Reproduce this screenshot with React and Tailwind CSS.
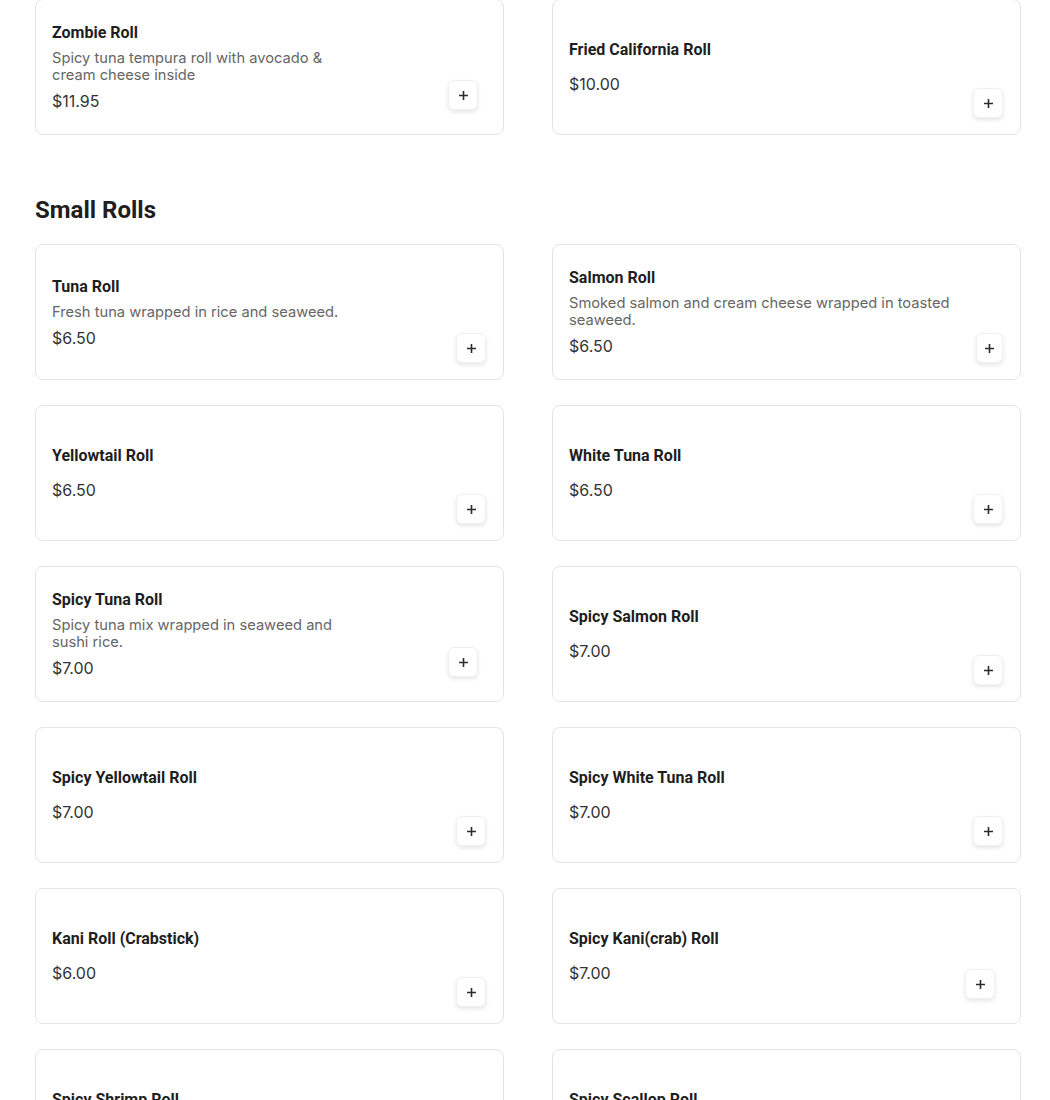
import React from 'react';

const top = [
  { name: 'Zombie Roll', desc: 'Spicy tuna tempura roll with avocado & cream cheese inside', price: '$11.95', alt: true },
  { name: 'Fried California Roll', price: '$10.00' },
];

const small = [
  { name: 'Tuna Roll', desc: 'Fresh tuna wrapped in rice and seaweed.', price: '$6.50' },
  { name: 'Salmon Roll', desc: 'Smoked salmon and cream cheese wrapped in toasted seaweed.', price: '$6.50' },
  { name: 'Yellowtail Roll', price: '$6.50' },
  { name: 'White Tuna Roll', price: '$6.50' },
  { name: 'Spicy Tuna Roll', desc: 'Spicy tuna mix wrapped in seaweed and sushi rice.', price: '$7.00', alt: true },
  { name: 'Spicy Salmon Roll', price: '$7.00' },
  { name: 'Spicy Yellowtail Roll', price: '$7.00' },
  { name: 'Spicy White Tuna Roll', price: '$7.00' },
  { name: 'Kani Roll (Crabstick)', price: '$6.00' },
  { name: 'Spicy Kani(crab) Roll', price: '$7.00', alt: true },
  { name: 'Spicy Shrimp Roll', price: '$7.00' },
  { name: 'Spicy Scallop Roll', price: '$7.00' },
];

function Plus() {
  return (
    <svg width="11" height="11" viewBox="0 0 11 11" fill="none">
      <path d="M5.5 1v9M1 5.5h9" stroke="#2b2b2b" strokeWidth="1.6" />
    </svg>
  );
}

function Card({ item }) {
  return (
    <div className="h-[136px] border border-[#e4e4e4] rounded-lg bg-white flex justify-between items-center pl-4 pr-[17px]">
      <div className={'flex flex-col ' + (item.alt ? 'max-w-[305px]' : 'max-w-[410px]')}>
        <div className="text-[16px] font-bold text-[#1e1e1e] leading-[20px]" style={{ fontFamily: 'Roboto, sans-serif' }}>{item.name}</div>
        {item.desc && (
          <div className="text-[14.7px] text-[#666] leading-[17px] mt-[7px]" style={{ fontFamily: 'Inter, sans-serif' }}>{item.desc}</div>
        )}
        <div className={'text-[16px] text-[#333] leading-[20px] ' + (item.desc ? 'mt-[7px]' : 'mt-[14px]')} style={{ fontFamily: 'Inter, sans-serif' }}>{item.price}</div>
      </div>
      <button className={'self-end w-[30px] h-[30px] rounded-md bg-white border border-[#f0f0f0] shadow-[0_2px_4px_rgba(0,0,0,0.1)] flex items-center justify-center ' + (item.alt ? 'mb-6 mr-2' : 'mb-4')}>
        <Plus />
      </button>
    </div>
  );
}

export default function App() {
  return (
    <div className="bg-white h-[1100px] overflow-hidden px-[35px] w-[1056px]">
      <div className="-mt-[1px] grid grid-cols-2 gap-x-[48px] gap-y-[25px]">
        {top.map(i => <Card key={i.name} item={i} />)}
      </div>
      <h2 className="mt-[61px] mb-[20px] text-[24px] leading-[28px] font-bold text-[#1e1e1e]" style={{ fontFamily: 'Roboto, sans-serif' }}>Small Rolls</h2>
      <div className="grid grid-cols-2 gap-x-[48px] gap-y-[25px]">
        {small.map(i => <Card key={i.name} item={i} />)}
      </div>
    </div>
  );
}
